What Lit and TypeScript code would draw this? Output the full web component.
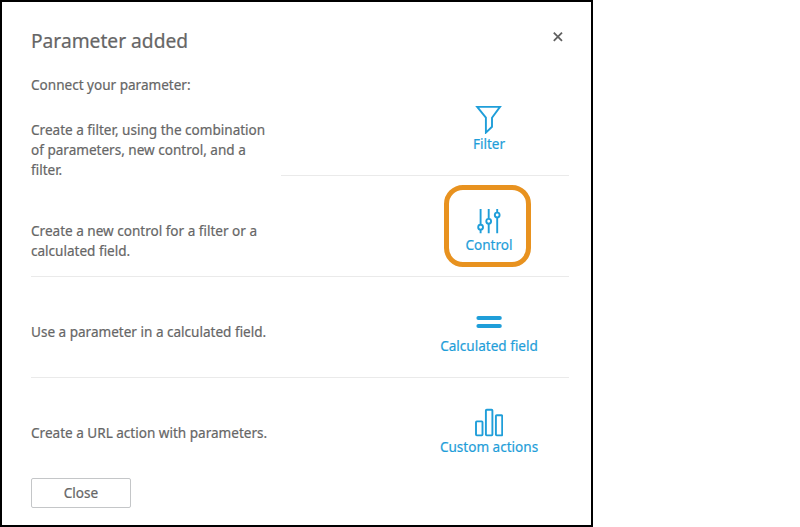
import { LitElement, html, css, svg } from "lit";
import { customElement } from "lit/decorators.js";

const filterIcon = svg`<path d="M2.2 2.9H25L17 13.7V22.8L10.9 28.6V13.7Z"/>`;
const controlIcon = svg`<path d="M5.6 4V19.5M5.6 25V28.3M13.7 4V13.5M13.7 19V28.3M22.2 4V7.2M22.2 12.8V28.3"/>
  <circle cx="5.6" cy="22.2" r="2.4"/><circle cx="13.7" cy="16.3" r="2.4"/><circle cx="22.2" cy="10" r="2.4"/>`;
const equalsIcon = svg`<path class="thick" d="M3.4 12H24.8M3.4 20H24.8"/>`;
const barsIcon = svg`<rect x="1" y="14.4" width="6.5" height="14" rx="0.8"/>
  <rect x="10.9" y="2.7" width="6.5" height="25.7" rx="0.8"/><rect x="20.9" y="8.2" width="6.3" height="20.2" rx="0.8"/>`;

const rows = [
  { lines: ["Create a filter, using the combination", "of parameters, new control, and a", "filter."], icon: filterIcon, label: "Filter" },
  { lines: ["Create a new control for a filter or a", "calculated field."], icon: controlIcon, label: "Control" },
  { lines: ["Use a parameter in a calculated field."], icon: equalsIcon, label: "Calculated field" },
  { lines: ["Create a URL action with parameters."], icon: barsIcon, label: "Custom actions" },
];

@customElement("app-root")
export class AppRoot extends LitElement {
  static styles = css`
    :host { display: block; height: 527px; background: #fff; }
    .dialog {
      box-sizing: border-box; width: 593px; height: 527px; border: 2px solid #000;
      padding: 26px 22px 0 29px; font: 13.55px/20px "Noto Sans", sans-serif; color: #666;
      -webkit-text-stroke: 0.2px currentColor;
    }
    .head { display: flex; justify-content: space-between; height: 45px; }
    .title { margin: 0; font-size: 19.2px; line-height: 26px; font-weight: 400; }
    .dismiss { width: 11px; height: 11px; margin: 3px 6px 0 0; stroke: #606060; stroke-width: 1.8; fill: none; }
    .intro { margin: 0; height: 23px; padding-top: 2px; }
    .row {
      display: grid; grid-template-columns: 250px 1fr; height: 100px;
      border-bottom: 1px solid #eaeaea;
    }
    .row.first { height: 78px; border-bottom: 0; }
    .row.last { border-bottom: 0; }
    .text { padding-top: 45px; }
    .row.first .text { padding-top: 22px; }
    .line { display: block; white-space: nowrap; }
    .side { box-sizing: border-box; display: flex; justify-content: flex-end; padding-top: 29px; }
    .row.first .side { height: 78px; padding-top: 6px; border-bottom: 1px solid #eaeaea; }
    .action {
      position: relative; display: flex; flex-direction: column; align-items: center;
      width: 160px; height: 50px; color: #1f9ed9; white-space: nowrap;
    }
    .glyph { width: 28px; height: 30px; flex: none; fill: none; stroke: currentColor; stroke-width: 1.9; }
    .thick { stroke-width: 4; stroke-linecap: round; }
    .ring {
      position: absolute; left: 35px; top: -20px; width: 77px; height: 72px;
      border: 5px solid #e8921f; border-radius: 19px;
    }
    .close {
      box-sizing: border-box; display: block; width: 100px; height: 30px; border: 1px solid #c4c6c8;
      border-radius: 2px; background: #fff; color: inherit; font: inherit; padding: 0;
      -webkit-text-stroke: inherit;
    }
  `;

  render() {
    return html`<section class="dialog">
      <header class="head">
        <h1 class="title">Parameter added</h1>
        <svg class="dismiss" viewBox="0 0 11 11"><path d="M1.8 1.6L10 9.8M10 1.6L1.8 9.8" /></svg>
      </header>
      <p class="intro">Connect your parameter:</p>
      ${rows.map((row, i) => html`<div class="row ${i === 0 ? "first" : ""} ${i === rows.length - 1 ? "last" : ""}">
        <div class="text">${row.lines.map((line) => html`<span class="line">${line}</span>`)}</div>
        <div class="side">
          <div class="action">
            <svg class="glyph" viewBox="0 0 28 30">${row.icon}</svg>
            <span>${row.label}</span>
            ${row.label === "Control" ? html`<div class="ring"></div>` : ""}
          </div>
        </div>
      </div>`)}
      <button class="close">Close</button>
    </section>`;
  }
}
